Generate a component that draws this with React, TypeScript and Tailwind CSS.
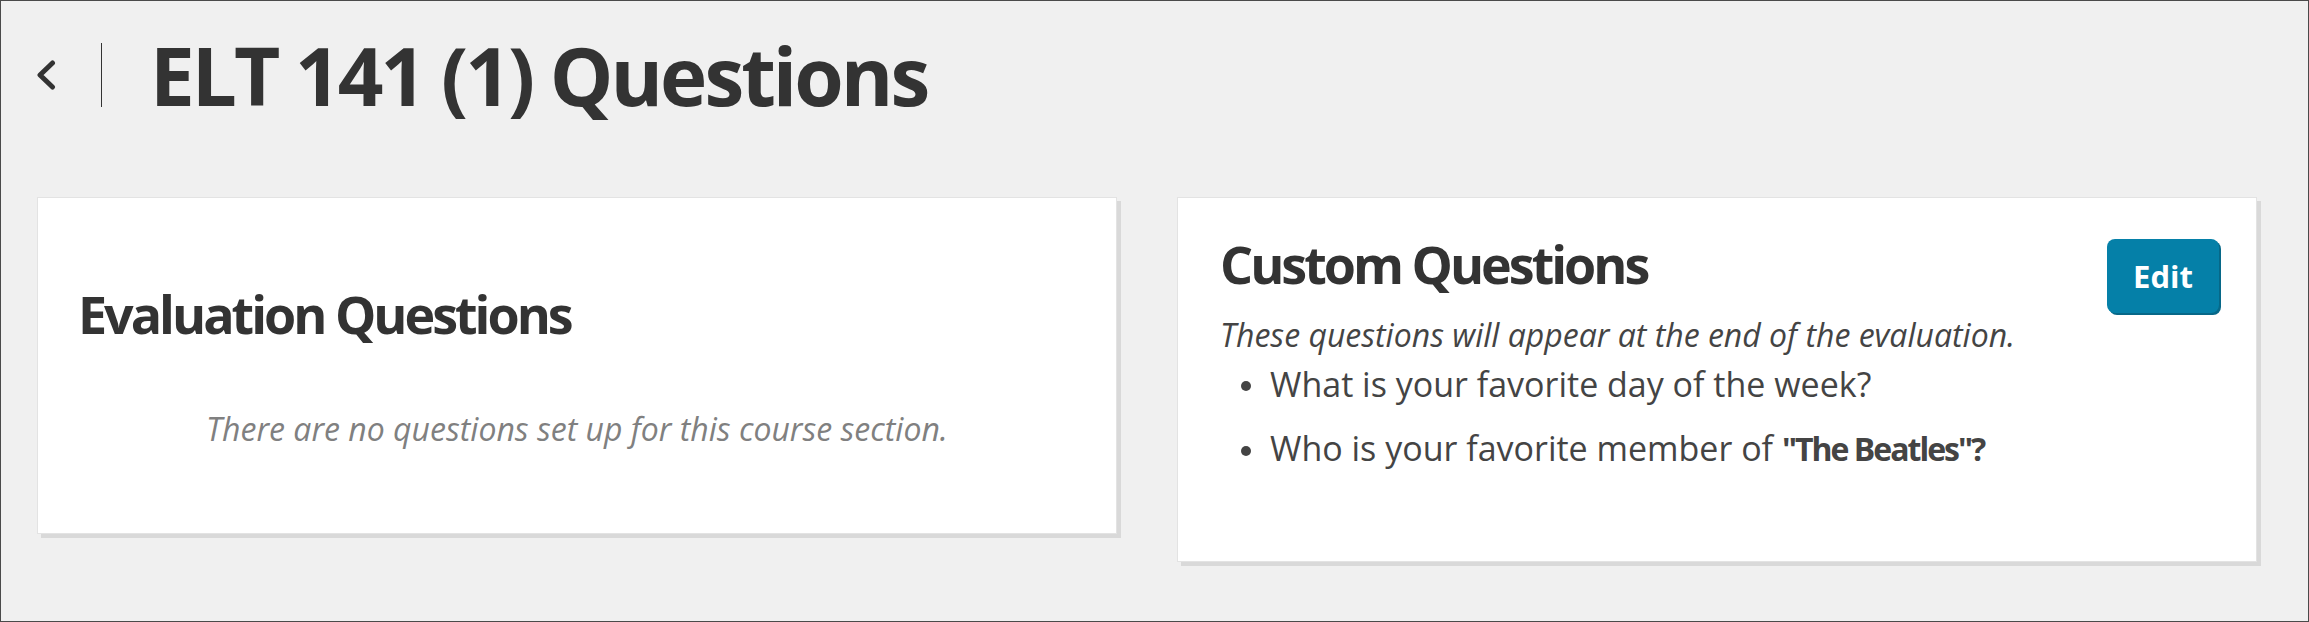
const questions = [
  { id: 1, text: "What is your favorite day of the week?" },
  { id: 2, text: "Who is your favorite member of ", bold: "\"The Beatles\"?" },
];

export default function App() {
  return (
    <div className="h-[622px] w-full border border-[#4a4a4a] bg-[#f0f0f0] font-['Open_Sans',sans-serif] text-[#333]">
      {/* Header */}
      <div className="mt-[42px] flex h-[64px] items-center">
        <button className="ml-[35px] flex h-[30px] w-[20px] items-center justify-center">
          <svg width="20" height="30" viewBox="0 0 20 30" fill="none">
            <polyline
              points="16.5,3 4,15 16.5,27"
              stroke="#333"
              strokeWidth="5"
              strokeLinecap="round"
              strokeLinejoin="round"
            />
          </svg>
        </button>
        <div className="ml-[45px] h-full w-px bg-[#333]" />
        <h1 className="ml-[48px] text-[80px] font-bold leading-none tracking-[-3px]">
          ELT 141 (1) Questions
        </h1>
      </div>

      {/* Cards */}
      <div className="mt-[90px] ml-[36px] flex items-start gap-[60px]">
        <div className="w-[1080px] border border-[#e3e3e3] bg-white px-[40px] pt-[86px] pb-[84px] shadow-[4px_4px_0_#d9d9d9]">
          <h2 className="text-[52px] font-bold leading-[60px] tracking-[-3px]">
            Evaluation Questions
          </h2>
          <p className="mt-[65px] text-center text-[32px] italic leading-[40px] text-[#808080]">
            There are no questions set up for this course section.
          </p>
        </div>

        <div className="w-[1080px] border border-[#e3e3e3] bg-white pt-[36px] pr-[37px] pb-[92px] pl-[42px] shadow-[4px_4px_0_#d9d9d9]">
          <div className="flex items-start justify-between">
            <h2 className="text-[52px] font-bold leading-[60px] tracking-[-3px]">
              Custom Questions
            </h2>
            <button className="mt-[5px] h-[74px] w-[112px] rounded-[8px] bg-[#0580a8] text-[31px] font-bold text-white shadow-[2px_2px_0_#076888]">
              Edit
            </button>
          </div>
          <p className="mt-[4px] text-[32px] italic leading-[36px] text-[#444]">
            These questions will appear at the end of the evaluation.
          </p>
          <ul className="mt-[11px] flex flex-col gap-[24px] pl-[21px] text-[34px] leading-[40px] text-[#444]">
            {questions.map((q) => (
              <li key={q.id} className="flex items-center gap-[19px]">
                <span className="mt-[4px] h-[10px] w-[10px] shrink-0 rounded-full bg-[#444]" />
                <span>
                  {q.text}
                  {q.bold && (
                    <strong className="text-[32px] font-bold tracking-[-2px]">{q.bold}</strong>
                  )}
                </span>
              </li>
            ))}
          </ul>
        </div>
      </div>
    </div>
  );
}
